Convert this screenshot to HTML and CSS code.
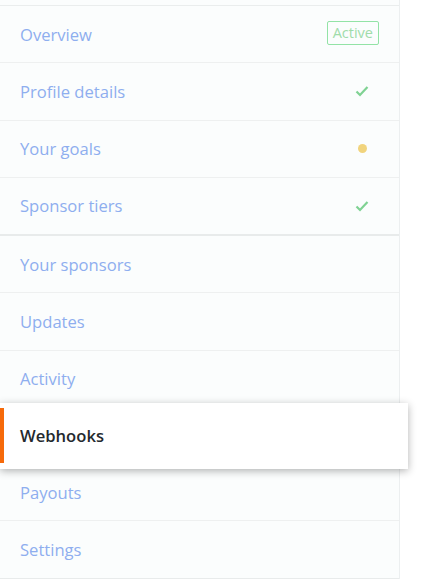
FILE: index.html
```html
<!DOCTYPE html>
<html>
<head>
<meta charset="utf-8">
<link rel="stylesheet" href="styles.css">
</head>
<body>
<div class="page">
  <nav class="panel">
    <div class="group first">
      <a class="item"><span class="label">Overview</span><span class="badge">Active</span></a>
      <a class="item"><span class="label">Profile details</span>
        <svg class="check" width="14" height="12" viewBox="0 0 14 12"><path d="M1.5 6.5 L5 10 L12.5 2" fill="none" stroke="#7fd293" stroke-width="2.2" stroke-linecap="butt"/></svg></a>
      <a class="item"><span class="label">Your goals</span><span class="dot"></span></a>
      <a class="item"><span class="label">Sponsor tiers</span>
        <svg class="check" width="14" height="12" viewBox="0 0 14 12"><path d="M1.5 6.5 L5 10 L12.5 2" fill="none" stroke="#7fd293" stroke-width="2.2" stroke-linecap="butt"/></svg></a>
    </div>
    <div class="group second">
      <a class="item"><span class="label">Your sponsors</span></a>
      <a class="item"><span class="label">Updates</span></a>
      <a class="item"><span class="label">Activity</span></a>
      <a class="item selected"><span class="label">Webhooks</span></a>
      <a class="item"><span class="label">Payouts</span></a>
      <a class="item last"><span class="label">Settings</span></a>
    </div>
  </nav>
</div>
</body>
</html>
```
FILE: styles.css
```css
html, body {
  margin: 0;
  padding: 0;
  background: #ffffff;
}
.page {
  width: 421px;
  height: 586px;
  overflow: hidden;
  font-family: "Open Sans", "Noto Sans", sans-serif;
}
.panel {
  width: 399px;
  background: #fbfdfd;
  border-right: 1px solid #eceff0;
  padding-top: 5px;
}
.group.first {
  border-top: 1px solid #eaeded;
  border-bottom: 2px solid #e8ebeb;
}
.item {
  display: flex;
  align-items: center;
  justify-content: space-between;
  box-sizing: border-box;
  height: 57.25px;
  padding: 0 20px;
  border-bottom: 1px solid #eef0f0;
  font-size: 16.6px;
  color: #8eaeef;
  position: relative;
}
.group.first .item:last-child {
  border-bottom: none;
  height: 56.25px;
}
.item.last {
  border-bottom: 1px solid #e8ebeb;
}
.badge {
  font-size: 14.5px;
  color: #9fdcaa;
  border: 1px solid #93e3a6;
  border-radius: 2px;
  padding: 0 5px;
  line-height: 22px;
  margin-top: -3px;
  background: #fbfdfd;
}
.check {
  margin-right: 10px;
}
.dot {
  width: 9px;
  height: 9px;
  border-radius: 50%;
  background: #f1d47d;
  margin-right: 12px;
}
.item.selected {
  color: #24292e;
  font-weight: 600;
  background: #ffffff;
  border-top: 1px solid #e1e4ea;
  border-bottom: 1px solid #e1e4ea;
  margin-top: -1px;
  z-index: 1;
}
.item.selected::before {
  content: "";
  position: absolute;
  left: 0;
  top: -5px;
  right: -9px;
  bottom: -6px;
  background: #ffffff;
  box-shadow: 0 2px 8px rgba(0, 0, 0, 0.3);
  z-index: -1;
}
.item.selected::after {
  content: "";
  position: absolute;
  left: 0;
  top: 0;
  bottom: 0;
  width: 4px;
  background: #f66a0a;
}
```
